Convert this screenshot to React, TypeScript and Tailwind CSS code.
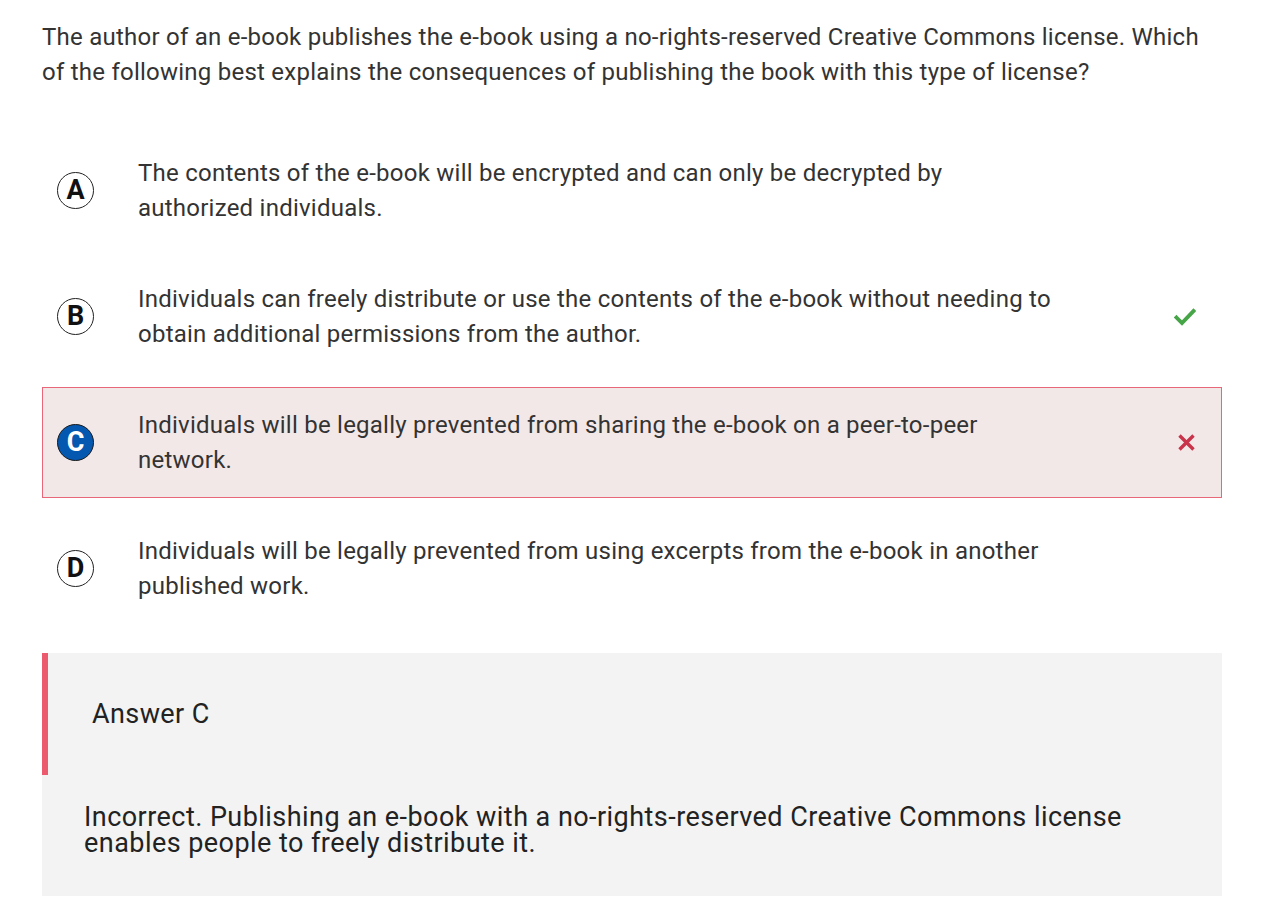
import React from 'react';

type Option = {
  letter: string;
  text: string;
  status?: 'correct' | 'wrong';
  selected?: boolean;
};

const options: Option[] = [
  { letter: 'A', text: 'The contents of the e-book will be encrypted and can only be decrypted by authorized individuals.' },
  {
    letter: 'B',
    text: 'Individuals can freely distribute or use the contents of the e-book without needing to obtain additional permissions from the author.',
    status: 'correct',
  },
  {
    letter: 'C',
    text: 'Individuals will be legally prevented from sharing the e-book on a peer-to-peer network.',
    status: 'wrong',
    selected: true,
  },
  { letter: 'D', text: 'Individuals will be legally prevented from using excerpts from the e-book in another published work.' },
];

const Check = () => (
  <svg width="22" height="18" viewBox="0 0 22 18" fill="none">
    <path d="M2.5 9.5 L8 15 L19.5 3" stroke="#46a546" strokeWidth="3.8" strokeLinecap="square" />
  </svg>
);

const Cross = () => (
  <svg width="19" height="19" viewBox="0 0 19 19" fill="none">
    <path d="M2.5 2.5 L16.5 16.5 M16.5 2.5 L2.5 16.5" stroke="#c9344a" strokeWidth="3.4" />
  </svg>
);

const App: React.FC = () => {
  return (
    <div className="min-h-screen bg-white font-['Roboto',sans-serif] text-[#333]">
      <div className="w-[1180px] ml-[42px] pt-[20px]">
        <p className="text-[24px] leading-[35px] tracking-[0.24px]">
          The author of an e-book publishes the e-book using a no-rights-reserved Creative Commons license. Which of the following best explains the consequences of publishing the book with this type of license?
        </p>

        <div className="mt-[45px] flex flex-col gap-[15px]">
          {options.map((o) => (
            <div
              key={o.letter}
              className={
                o.selected
                  ? 'flex items-center h-[111px] border border-[#e8687a] bg-[#f3e8e8]'
                  : 'flex items-center h-[111px] border border-transparent'
              }
            >
              <div className="w-[95px] shrink-0 pl-[14px]">
                <div
                  className={
                    o.selected
                      ? 'w-[37px] h-[37px] rounded-full border border-[#1a1a1a] bg-[#0558b0] text-white flex items-center justify-center text-[27px] font-bold leading-none'
                      : 'w-[37px] h-[37px] rounded-full border border-[#222] bg-white text-[#111] flex items-center justify-center text-[27px] font-bold leading-none'
                  }
                >
                  {o.letter}
                </div>
              </div>
              <p className="w-[925px] text-[24px] leading-[35px] tracking-[0.24px]">{o.text}</p>
              <div className="flex-1 flex justify-end pr-[25px]">
                {o.status === 'correct' && <Check />}
                {o.status === 'wrong' && <Cross />}
              </div>
            </div>
          ))}
        </div>

        <div className="mt-[29px] bg-[#f3f3f3] pb-[40px]">
          <div className="flex items-center h-[122px] border-l-[6px] border-[#ec5a6d] pl-[44px]">
            <span className="text-[27px] tracking-[0.4px] text-[#222]">Answer C</span>
          </div>
          <p className="mt-[29px] pl-[42px] pr-[60px] text-[27px] leading-[26px] tracking-[0.45px] text-[#222]">
            Incorrect. Publishing an e-book with a no-rights-reserved Creative Commons license enables people to freely distribute it.
          </p>
        </div>
      </div>
    </div>
  );
};

export default App;
